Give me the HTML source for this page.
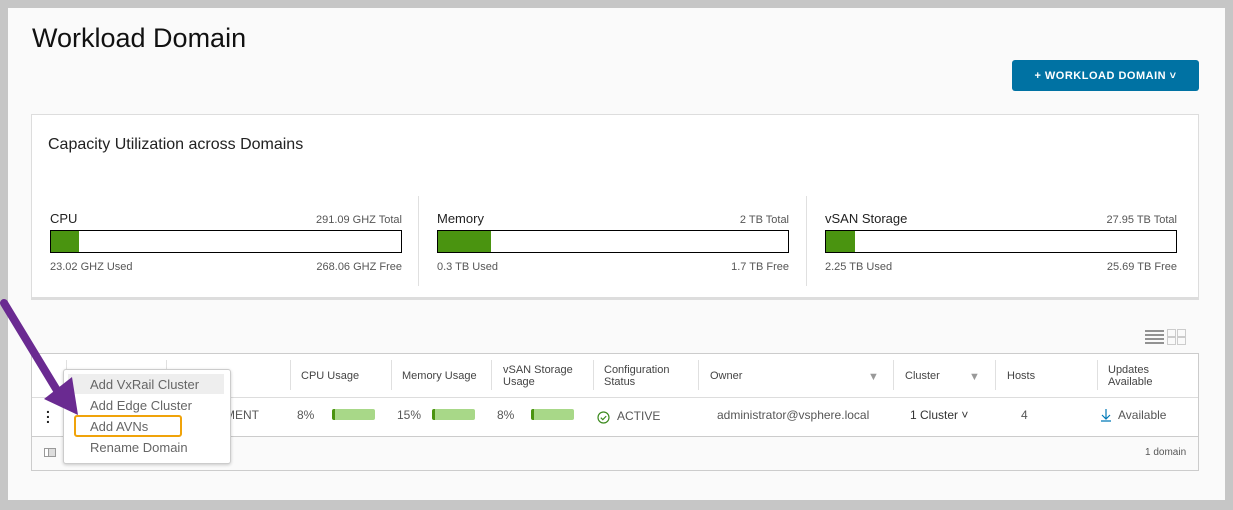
<!DOCTYPE html><html><head><style>
*{box-sizing:border-box;margin:0;padding:0}
body{width:1233px;height:510px;background:#c6c6c6;font-family:"Liberation Sans",sans-serif;position:relative;overflow:hidden;color:#333}
.a{position:absolute}
.in{left:8px;top:8px;width:1217px;height:492px;background:#fafafa}
.t{font-size:12px;color:#565656}
.bar{height:23px;border:1px solid #000;background:#fff}
.bar i{display:block;height:100%;background:#4a9410}
.hd{font-size:11px;color:#444;line-height:12px}
.vl{width:1px;background:#e0e0e0}
.mb{height:11px;background:#a8d888;border-radius:2px;border-left:3px solid #4a9410}
.row{display:flex;justify-content:space-between;align-items:baseline}
</style></head><body>
<div class="a in"></div>
<div class="a" style="left:32px;top:22px;font-size:27px;color:#111;line-height:32px">Workload Domain</div>
<div class="a" style="left:1012px;top:60px;width:187px;height:31px;background:#0072a3;border-radius:3px;color:#fff;font-size:11px;font-weight:bold;letter-spacing:.5px;display:flex;align-items:center;justify-content:center">+ WORKLOAD DOMAIN ˅</div>
<div class="a" style="left:31px;top:114px;width:1168px;height:184px;background:#fff;border:1px solid #ddd;box-shadow:0 2px 0 #ddd"></div>
<div class="a" style="left:48px;top:136px;font-size:16px;color:#222">Capacity Utilization across Domains</div>
<div class="a vl" style="left:418px;top:196px;height:90px"></div>
<div class="a vl" style="left:806px;top:196px;height:90px"></div>

<div class="a" style="left:50px;top:211px;width:352px">
<div class="row"><span style="font-size:13px;color:#222">CPU</span><span class="t" style="font-size:11px">291.09 GHZ Total</span></div>
<div class="bar" style="margin-top:4px"><i style="width:28px"></i></div>
<div class="row t" style="margin-top:8px"><span style="font-size:11px">23.02 GHZ Used</span><span style="font-size:11px">268.06 GHZ Free</span></div></div>
<div class="a" style="left:437px;top:211px;width:352px">
<div class="row"><span style="font-size:13px;color:#222">Memory</span><span class="t" style="font-size:11px">2 TB Total</span></div>
<div class="bar" style="margin-top:4px"><i style="width:53px"></i></div>
<div class="row t" style="margin-top:8px"><span style="font-size:11px">0.3 TB Used</span><span style="font-size:11px">1.7 TB Free</span></div></div>
<div class="a" style="left:825px;top:211px;width:352px">
<div class="row"><span style="font-size:13px;color:#222">vSAN Storage</span><span class="t" style="font-size:11px">27.95 TB Total</span></div>
<div class="bar" style="margin-top:4px"><i style="width:29px"></i></div>
<div class="row t" style="margin-top:8px"><span style="font-size:11px">2.25 TB Used</span><span style="font-size:11px">25.69 TB Free</span></div></div>

<svg class="a" style="left:1144px;top:329px" width="44" height="16"><g stroke="#555" stroke-width="1.3"><line x1="1" y1="2" x2="20" y2="2"/><line x1="1" y1="6" x2="20" y2="6"/><line x1="1" y1="10" x2="20" y2="10"/><line x1="1" y1="14" x2="20" y2="14"/></g><g fill="none" stroke="#ccc"><rect x="23.5" y="0.5" width="8" height="7"/><rect x="33.5" y="0.5" width="8" height="7"/><rect x="23.5" y="8.5" width="8" height="7"/><rect x="33.5" y="8.5" width="8" height="7"/></g></svg>

<div class="a" style="left:31px;top:353px;width:1168px;height:118px;background:#fff;border:1px solid #ccc"></div>
<div class="a" style="left:32px;top:436px;width:1166px;height:34px;background:#fafafa;border-top:1px solid #ccc"></div>
<div class="a" style="left:32px;top:397px;width:1166px;height:1px;background:#ddd"></div>
<div class="a vl" style="left:66px;top:360px;height:30px"></div>
<div class="a vl" style="left:166px;top:360px;height:30px"></div>
<div class="a vl" style="left:290px;top:360px;height:30px"></div>
<div class="a vl" style="left:391px;top:360px;height:30px"></div>
<div class="a vl" style="left:491px;top:360px;height:30px"></div>
<div class="a vl" style="left:593px;top:360px;height:30px"></div>
<div class="a vl" style="left:698px;top:360px;height:30px"></div>
<div class="a vl" style="left:893px;top:360px;height:30px"></div>
<div class="a vl" style="left:995px;top:360px;height:30px"></div>
<div class="a vl" style="left:1097px;top:360px;height:30px"></div>
<div class="a hd" style="left:301px;top:370px">CPU Usage</div>
<div class="a hd" style="left:402px;top:370px">Memory Usage</div>
<div class="a hd" style="left:503px;top:364px">vSAN Storage<br>Usage</div>
<div class="a hd" style="left:604px;top:364px">Configuration<br>Status</div>
<div class="a hd" style="left:710px;top:370px">Owner</div>
<div class="a hd" style="left:868px;top:371px;color:#999">▼</div>
<div class="a hd" style="left:905px;top:370px">Cluster</div>
<div class="a hd" style="left:969px;top:371px;color:#999">▼</div>
<div class="a hd" style="left:1007px;top:370px">Hosts</div>
<div class="a hd" style="left:1108px;top:364px">Updates<br>Available</div>

<div class="a" style="left:46px;top:406px;font-size:14px;font-weight:bold;line-height:5px;color:#222">.<br>.<br>.</div>
<div class="a t" style="left:225px;top:408px">MENT</div>
<div class="a t" style="left:297px;top:408px">8%</div><div class="a mb" style="left:332px;top:409px;width:43px"></div>
<div class="a t" style="left:397px;top:408px">15%</div><div class="a mb" style="left:432px;top:409px;width:43px"></div>
<div class="a t" style="left:497px;top:408px">8%</div><div class="a mb" style="left:531px;top:409px;width:43px"></div>
<svg class="a" style="left:597px;top:411px" width="13" height="13"><circle cx="6.5" cy="6.5" r="5.5" fill="none" stroke="#3c8a1e" stroke-width="1.2"/><path d="M3.8 6.7l2 2 3.4-3.6" fill="none" stroke="#3c8a1e" stroke-width="1.2"/></svg>
<div class="a t" style="left:617px;top:409px">ACTIVE</div>
<div class="a t" style="left:717px;top:408px">administrator@vsphere.local</div>
<div class="a t" style="left:910px;top:408px;color:#333">1 Cluster ˅</div>
<div class="a t" style="left:1021px;top:408px">4</div>
<svg class="a" style="left:1100px;top:408px" width="12" height="14"><path d="M6 1v10M2 7l4 4 4-4M1 13h10" fill="none" stroke="#0079b8" stroke-width="1.2"/></svg>
<div class="a t" style="left:1118px;top:408px">Available</div>
<div class="a t" style="left:1145px;top:447px;font-size:10px">1 domain</div>
<div class="a" style="left:44px;top:448px;width:12px;height:9px;border:1px solid #999;background:linear-gradient(90deg,#fff 3px,#999 3px,#999 4px,#ddd 4px)"></div>

<div class="a" style="left:63px;top:369px;width:168px;height:95px;background:#fff;border:1px solid #ccc;border-radius:3px;box-shadow:0 1px 3px rgba(0,0,0,.2)"></div>
<div class="a" style="left:68px;top:374px;width:156px;height:20px;background:#eee"></div>
<div class="a" style="left:90px;top:374px;font-size:13px;color:#666;line-height:21px">Add VxRail Cluster<br>Add Edge Cluster<br>Add AVNs<br>Rename Domain</div>
<div class="a" style="left:74px;top:415px;width:108px;height:22px;border:2px solid #f0a30a;border-radius:3px"></div>
<svg class="a" style="left:0;top:295px" width="90" height="130"><line x1="4" y1="8" x2="58" y2="97" stroke="#6a2a91" stroke-width="8" stroke-linecap="round"/><polygon points="44,104 78,120 72,82" fill="#6a2a91"/></svg>
</body></html>
